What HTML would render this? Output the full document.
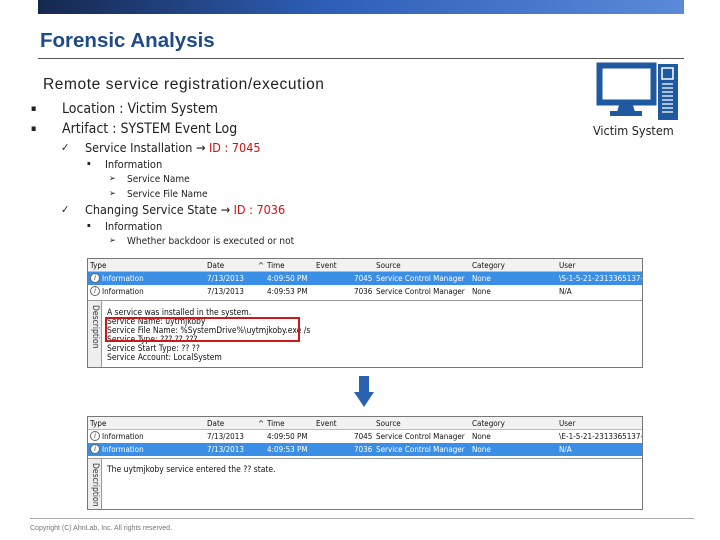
<!DOCTYPE html>
<html><head><meta charset="utf-8"><style>
*{margin:0;padding:0;box-sizing:border-box}
body{width:720px;height:540px;background:#fff;position:relative;overflow:hidden;font-family:"Liberation Sans",sans-serif}
.a{position:absolute;white-space:nowrap}
.bar{left:38px;top:0;width:646px;height:14px;background:linear-gradient(90deg,#16284e,#2e5fb8 45%,#5a8ad8)}
.t{font-family:"DejaVu Sans Condensed","Liberation Sans",sans-serif;color:#222}
.tbl{position:absolute;left:87px;width:556px;border:1px solid #777;background:#fff;font-family:"DejaVu Sans Condensed",sans-serif;font-size:8px;color:#111;overflow:hidden}
.row{position:absolute;left:0;width:556px;height:13px;line-height:13px}
.row span{position:absolute;top:0}
.hd{background:#f2f2f2;border-bottom:1px solid #bbb}
.sel{background:#3a8ee6;color:#fff}
.ic{display:inline-block;width:10px;height:10px;border:1px solid #666;border-radius:50%;font-size:7px;line-height:8px;text-align:center;color:#333;background:#fff;margin:1px 2px 0 2px;vertical-align:top}
.desc{position:absolute;left:0;width:556px;border-top:1px solid #999}
.vl{position:absolute;left:0;top:0;width:14px;height:100%;background:#eee;border-right:1px solid #999}
.vl div{position:absolute;left:2px;top:4px;writing-mode:vertical-rl;font-size:8.5px;color:#333}
.dt{position:absolute;left:19px;font-size:8.5px;line-height:9px;color:#111}
</style></head><body>
<div class="a bar"></div>
<div class="a" style="left:40px;top:29px;font-size:20.5px;font-weight:bold;color:#1e4a8a;letter-spacing:0px">Forensic Analysis</div>
<div class="a" style="left:38px;top:58px;width:646px;height:1px;background:#555"></div>
<div class="a" style="left:43px;top:76px;font-size:15.5px;color:#222;letter-spacing:0.6px">Remote service registration/execution</div>
<div class="a t" style="left:31px;top:104px;font-size:9px">▪</div>
<div class="a t" style="left:62px;top:101px;font-size:14px">Location : Victim System</div>
<div class="a t" style="left:31px;top:124px;font-size:9px">▪</div>
<div class="a t" style="left:62px;top:121px;font-size:14px">Artifact : SYSTEM Event Log</div>
<div class="a t" style="left:61px;top:141px;font-size:11px">✓</div>
<div class="a t" style="left:85px;top:140px;font-size:12.5px">Service Installation → <span style="color:#d01010">ID : 7045</span></div>
<div class="a t" style="left:87px;top:160px;font-size:6px">▪</div>
<div class="a t" style="left:105px;top:158px;font-size:11px">Information</div>
<div class="a t" style="left:109px;top:174px;font-size:9px">➢</div>
<div class="a t" style="left:127px;top:174px;font-size:10px">Service Name</div>
<div class="a t" style="left:109px;top:189px;font-size:9px">➢</div>
<div class="a t" style="left:127px;top:189px;font-size:10px">Service File Name</div>
<div class="a t" style="left:61px;top:203px;font-size:11px">✓</div>
<div class="a t" style="left:85px;top:202px;font-size:12.5px">Changing Service State → <span style="color:#d01010">ID : 7036</span></div>
<div class="a t" style="left:87px;top:222px;font-size:6px">▪</div>
<div class="a t" style="left:105px;top:220px;font-size:11px">Information</div>
<div class="a t" style="left:109px;top:236px;font-size:9px">➢</div>
<div class="a t" style="left:127px;top:236px;font-size:10px">Whether backdoor is executed or not</div>

<svg class="a" style="left:596px;top:62px" width="88" height="60" viewBox="0 0 88 60">
<rect x="3.5" y="3.5" width="54" height="37" fill="none" stroke="#1f5aa0" stroke-width="6"/>
<path d="M24 40h12l3 10H21z" fill="#1f5aa0"/><rect x="14" y="49" width="32" height="5" fill="#1f5aa0"/>
<rect x="62" y="2" width="20" height="56" fill="#1f5aa0"/>
<rect x="66" y="6" width="11" height="11" fill="none" stroke="#fff" stroke-width="1.5"/>
<g stroke="#fff" stroke-width="1.3"><path d="M66 22h11M66 26h11M66 30h11M66 34h11M66 38h11M66 42h11M66 46h11M66 50h11"/></g>
</svg>
<div class="a t" style="left:593px;top:123px;font-size:12.5px">Victim System</div>

<div class="tbl" style="top:258px;height:110px">
 <div class="row hd" style="top:0"><span style="left:2px">Type</span><span style="left:119px">Date</span><span style="left:170px">^</span><span style="left:179px">Time</span><span style="left:228px">Event</span><span style="left:288px">Source</span><span style="left:384px">Category</span><span style="left:471px">User</span></div>
 <div class="row sel" style="top:13px"><span style="left:0"><i class="ic">i</i>Information</span><span style="left:119px">7/13/2013</span><span style="left:179px">4:09:50 PM</span><span style="left:266px">7045</span><span style="left:288px">Service Control Manager</span><span style="left:384px">None</span><span style="left:471px">\S-1-5-21-2313365137-</span></div>
 <div class="row" style="top:26px"><span style="left:0"><i class="ic">i</i>Information</span><span style="left:119px">7/13/2013</span><span style="left:179px">4:09:53 PM</span><span style="left:266px">7036</span><span style="left:288px">Service Control Manager</span><span style="left:384px">None</span><span style="left:471px">N/A</span></div>
 <div class="desc" style="top:41px;height:69px"><div class="vl"><div>Description</div></div>
 <div class="dt" style="top:8px">A service was installed in the system.<br>Service Name: uytmjkoby<br>Service File Name: %SystemDrive%\uytmjkoby.exe /s<br>Service Type: ??? ?? ???<br>Service Start Type: ?? ??<br>Service Account: LocalSystem</div>
 <div style="position:absolute;left:17px;top:16px;width:195px;height:25px;border:2px solid #d01818"></div></div>
</div>

<svg class="a" style="left:354px;top:376px" width="20" height="32"><path d="M5 0h10v16h5L10 31 0 16h5z" fill="#2a62b0"/></svg>

<div class="tbl" style="top:416px;height:94px">
 <div class="row hd" style="top:0"><span style="left:2px">Type</span><span style="left:119px">Date</span><span style="left:170px">^</span><span style="left:179px">Time</span><span style="left:228px">Event</span><span style="left:288px">Source</span><span style="left:384px">Category</span><span style="left:471px">User</span></div>
 <div class="row" style="top:13px"><span style="left:0"><i class="ic">i</i>Information</span><span style="left:119px">7/13/2013</span><span style="left:179px">4:09:50 PM</span><span style="left:266px">7045</span><span style="left:288px">Service Control Manager</span><span style="left:384px">None</span><span style="left:471px">\E-1-5-21-2313365137-</span></div>
 <div class="row sel" style="top:26px"><span style="left:0"><i class="ic">i</i>Information</span><span style="left:119px">7/13/2013</span><span style="left:179px">4:09:53 PM</span><span style="left:266px">7036</span><span style="left:288px">Service Control Manager</span><span style="left:384px">None</span><span style="left:471px">N/A</span></div>
 <div class="desc" style="top:41px;height:53px"><div class="vl"><div>Description</div></div>
 <div class="dt" style="top:7px">The uytmjkoby service entered the ?? state.</div></div>
</div>

<div class="a" style="left:30px;top:518px;width:664px;height:1px;background:#aaa"></div>
<div class="a" style="left:30px;top:525px;font-size:7px;color:#777">Copyright (C) AhnLab, Inc. All rights reserved.</div>
</body></html>
